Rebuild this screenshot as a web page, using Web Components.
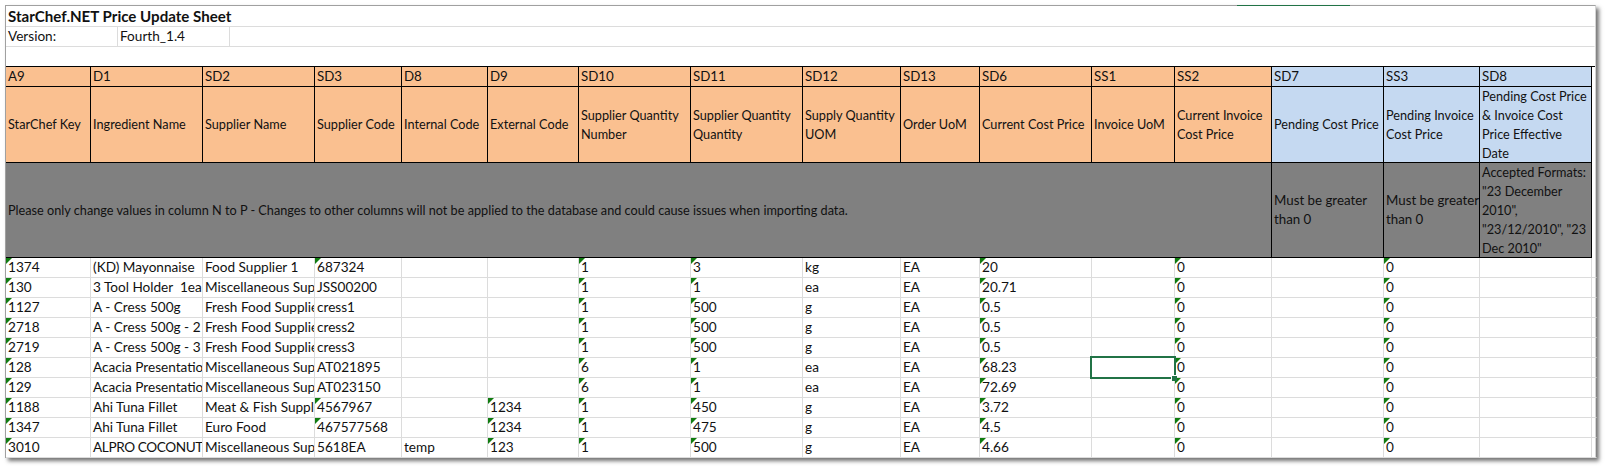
<!DOCTYPE html>
<html>
<head>
<meta charset="utf-8">
<title>StarChef.NET Price Update Sheet</title>
<style>
  html, body { margin: 0; padding: 0; background: #fff; }
  body { width: 1605px; height: 466px; overflow: hidden; font-family: Lato, "Liberation Sans", sans-serif; }
</style>
</head>
<body>
<price-sheet></price-sheet>
<script>
// column widths, taken from the sheet's gridlines
const COLS = [85, 112, 112, 87, 86, 91, 112, 112, 98, 79, 112, 83, 97, 112, 96, 112];

const HEAD = [
  ['A9', 'StarChef Key'], ['D1', 'Ingredient Name'], ['SD2', 'Supplier Name'], ['SD3', 'Supplier Code'],
  ['D8', 'Internal Code'], ['D9', 'External Code'], ['SD10', 'Supplier Quantity\nNumber'],
  ['SD11', 'Supplier Quantity\nQuantity'], ['SD12', 'Supply Quantity\nUOM'], ['SD13', 'Order UoM'],
  ['SD6', 'Current Cost Price'], ['SS1', 'Invoice UoM'], ['SS2', 'Current Invoice\nCost Price'],
  ['SD7', 'Pending Cost Price'], ['SS3', 'Pending Invoice\nCost Price'],
  ['SD8', 'Pending Cost Price\n& Invoice Cost\nPrice Effective\nDate']
];

const ROWS = [
  ['1374', '(KD) Mayonnaise', 'Food Supplier 1', '687324', '', '', '1', '3', 'kg', 'EA', '20'],
  ['130', '3 Tool Holder  1ea', 'Miscellaneous Supplier', 'JSS00200', '', '', '1', '1', 'ea', 'EA', '20.71'],
  ['1127', 'A - Cress 500g', 'Fresh Food Supplier', 'cress1', '', '', '1', '500', 'g', 'EA', '0.5'],
  ['2718', 'A - Cress 500g - 2', 'Fresh Food Supplier', 'cress2', '', '', '1', '500', 'g', 'EA', '0.5'],
  ['2719', 'A - Cress 500g - 3', 'Fresh Food Supplier', 'cress3', '', '', '1', '500', 'g', 'EA', '0.5'],
  ['128', 'Acacia Presentation', 'Miscellaneous Supplier', 'AT021895', '', '', '6', '1', 'ea', 'EA', '68.23'],
  ['129', 'Acacia Presentation', 'Miscellaneous Supplier', 'AT023150', '', '', '6', '1', 'ea', 'EA', '72.69'],
  ['1188', 'Ahi Tuna Fillet', 'Meat & Fish Supplier', '4567967', '', '1234', '1', '450', 'g', 'EA', '3.72'],
  ['1347', 'Ahi Tuna Fillet', 'Euro Food', '467577568', '', '1234', '1', '475', 'g', 'EA', '4.5'],
  ['3010', 'ALPRO COCONUT', 'Miscellaneous Supplier', '5618EA', 'temp', '123', '1', '500', 'g', 'EA', '4.66']
];

// one spreadsheet cell; the green corner is the "number stored as text" flag
class SheetCell extends HTMLElement {
  constructor() {
    super();
    this.attachShadow({ mode: 'open' });
    this.shadowRoot.innerHTML = `
      <style>
        :host {
          display: flex;
          position: relative;
          box-sizing: border-box;
          min-width: 0;
          overflow: hidden;
          padding: 0 2px;
          color: #111;
          font-size: 13.6px;
          line-height: 19px;
          align-items: flex-end;
          border-right: 1px solid #dcdcdc;
          border-bottom: 1px solid #dcdcdc;
        }
        :host([plain]) { border-right-color: transparent; }
        :host([open-end]) { border-bottom-color: transparent; }
        :host([band]) { border-color: #000; border-width: 0 1px 1px 0; align-items: center; font-size: 12.7px; }
        :host([code]) { font-size: 13.3px; }
        :host([orange]) { background: #fac090; }
        :host([blue]) { background: #c5d9f1; }
        :host([grey]) { background: #808080; }
        :host([note]) { font-size: 13.3px; }
        :host([heading]) { font-weight: 700; font-size: 15.1px; align-items: center; }
        .text { white-space: pre; }
        .flag {
          display: none;
          position: absolute;
          left: 0;
          top: 0;
          border-style: solid;
          border-width: 6px 6px 0 0;
          border-color: #107c10 transparent transparent transparent;
        }
        :host([flag]) .flag { display: block; }
      </style>
      <span class="flag"></span><span class="text"><slot></slot></span>`;
  }
}
customElements.define('sheet-cell', SheetCell);

class PriceSheet extends HTMLElement {
  constructor() {
    super();
    this.attachShadow({ mode: 'open' });
    this.shadowRoot.innerHTML = `
      <style>
        :host {
          display: block;
          box-sizing: border-box;
          width: 1591px;
          height: 453px;
          margin: 5px 0 0 5px;
          background: #fff;
          border-left: 1px solid #a0a0a0;
          border-top: 1px solid #a0a0a0;
          border-right: 1px solid #d4d4d4;
          position: relative;
          box-shadow: 3px 3px 4px rgba(0, 0, 0, .55);
        }
        .tab {
          position: absolute;
          left: 1231px;
          top: -1px;
          width: 113px;
          height: 1px;
          background: #217346;
        }
        .top { display: grid; grid-template-rows: 21px 20px 19px; height: 60px; }
        .row { display: grid; min-width: 0; }
        .title, .blank { grid-template-columns: 1589px; }
        .version { grid-template-columns: 112px 112px 1365px; }
        .grid {
          display: grid;
          grid-template-columns: ${COLS.map(w => w + 'px').join(' ')} 3px;
          grid-template-rows: 20px 76px 95px repeat(10, 20px);
          border-top: 1px solid #000;
        }
        .select {
          position: absolute;
          left: 1084px;
          top: 350px;
          width: 86px;
          height: 23px;
          box-sizing: border-box;
          border: 2px solid #217346;
          pointer-events: none;
        }
        .select::after {
          content: '';
          position: absolute;
          right: -3px;
          bottom: -4px;
          width: 6px;
          height: 6px;
          background: #217346;
          border-left: 1px solid #fff;
          border-top: 1px solid #fff;
          box-sizing: border-box;
        }
      </style>
      <div class="tab"></div>
      <div class="top">
        <div class="row title"><sheet-cell heading plain>StarChef.NET Price Update Sheet</sheet-cell></div>
        <div class="row version">
          <sheet-cell>Version:</sheet-cell><sheet-cell>Fourth_1.4</sheet-cell><sheet-cell plain></sheet-cell>
        </div>
        <div class="row blank"><sheet-cell plain open-end></sheet-cell></div>
      </div>
      <div class="grid" id="grid"></div>
      <div class="select"></div>`;

    const grid = this.shadowRoot.getElementById('grid');
    const cell = (text, attrs) => {
      const c = document.createElement('sheet-cell');
      (attrs || []).forEach(a => c.setAttribute(a, ''));
      c.textContent = text;
      grid.appendChild(c);
      return c;
    };
    const tint = i => (i > 12 ? 'blue' : 'orange');
    const spacer = () => cell('', ['plain', 'open-end']);

    HEAD.forEach((h, i) => cell(h[0], ['band', 'code', tint(i)]));
    spacer();
    HEAD.forEach((h, i) => cell(h[1], ['band', tint(i)]));
    spacer();

    cell('Please only change values in column N to P - Changes to other columns will not be applied to the database and could cause issues when importing data.', ['band', 'grey']).style.gridColumn = '1 / span 13';
    cell('Must be greater\nthan 0', ['band', 'grey', 'note']);
    cell('Must be greater\nthan 0', ['band', 'grey', 'note']);
    cell('Accepted Formats:\n"23 December\n2010",\n"23/12/2010", "23\nDec 2010"', ['band', 'grey']);
    spacer();

    // which columns carry the green corner: key, qty number, qty, cost, ss2, ss3
    ROWS.forEach((r, y) => {
      for (let x = 0; x < 16; x++) {
        const attrs = [];
        let text = x < r.length ? r[x] : '';
        if (x === 12 || x === 14) text = '0';
        const isFlag = x === 0 || x === 6 || x === 7 || x === 10 || x === 12 || x === 14 ||
          (x === 3 && (y === 0 || y === 7 || y === 8)) || (x === 5 && r[5]);
        if (isFlag) attrs.push('flag');
        const c = cell(text, attrs);
        // capitals run wide in this font, squeeze so the whole name fits
        if (text === 'ALPRO COCONUT') c.style.letterSpacing = '-0.4px';
      }
      cell('', ['plain']);
    });
  }
}
customElements.define('price-sheet', PriceSheet);
</script>
</body>
</html>
